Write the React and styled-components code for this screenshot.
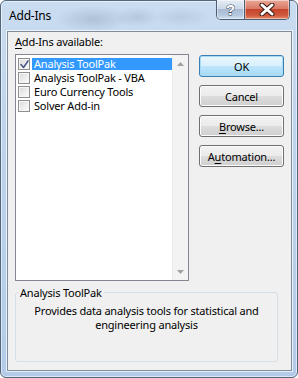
import React from "react";
import styled, { createGlobalStyle } from "styled-components";

const GlobalStyle = createGlobalStyle`
  html, body { margin: 0; padding: 0; background: #ffffff; }
  body { font-family: "Noto Sans", "Open Sans", sans-serif; font-size: 11px; letter-spacing: -0.2px; color: #000; }
  * { box-sizing: border-box; }
`;

const Frame = styled.div`
  width: 298px;
  height: 378px;
  border: 1px solid #52667f;
  border-radius: 6px;
  background:
    radial-gradient(ellipse 38px 13px at 92px 18px, rgba(110, 130, 155, 0.28), transparent),
    radial-gradient(ellipse 22px 10px at 136px 16px, rgba(110, 130, 155, 0.22), transparent),
    radial-gradient(ellipse 30px 10px at 180px 16px, rgba(110, 130, 155, 0.16), transparent),
    linear-gradient(180deg, #cadcf0 0%, #bed4ec 35%, #b3cbe8 100%);
  box-shadow: inset 0 0 0 1px rgba(255, 255, 255, 0.55);
  display: flex;
  flex-direction: column;
  padding: 0 5px 6px 6px;
`;

const TitleBar = styled.div`
  height: 30px;
  display: flex;
  align-items: flex-start;
  justify-content: space-between;
  padding-left: 2px;
`;

const Title = styled.div`
  font-size: 12px;
  line-height: 15px;
  padding-top: 7px;
  color: #000;
`;

const Caption = styled.div`
  display: flex;
  margin-top: -1px;
  margin-right: 2px;
  border: 1px solid #4b5d72;
  border-top: none;
  border-radius: 0 0 5px 5px;
  overflow: hidden;
  height: 20px;
`;

const CapButton = styled.div`
  width: ${(p) => p.$w}px;
  height: 100%;
  display: flex;
  align-items: center;
  justify-content: center;
  background: ${(p) =>
    p.$close
      ? "linear-gradient(180deg, #e9a898 0%, #d97a66 45%, #c5452c 50%, #d0583c 80%, #e48a6c 100%)"
      : "linear-gradient(180deg, #e4ecf6 0%, #cdd9e8 45%, #a9bbd2 50%, #b6c8de 80%, #d2e0ef 100%)"};
  box-shadow: inset 0 0 0 1px rgba(255, 255, 255, 0.45);
  & + & { border-left: 1px solid #4b5d72; }
`;

const HelpGlyph = styled.span`
  font-family: "Liberation Sans", sans-serif;
  font-weight: bold;
  font-size: 15px;
  line-height: 15px;
  letter-spacing: 0;
  color: #ffffff;
  -webkit-text-stroke: 1px #3c4a5c;
  paint-order: stroke fill;
`;

const Client = styled.div`
  flex: 1;
  border: 1px solid #7f8c9c;
  box-shadow: 0 0 0 1px rgba(255, 255, 255, 0.7);
  background: #f0f0f0;
  display: flex;
  flex-direction: column;
  padding: 2px 6px 0 7px;
`;

const Label = styled.div`
  line-height: 15px;
  height: 15px;
  margin-bottom: 5px;
`;

const Key = styled.span`
  text-decoration: underline;
  text-underline-offset: 2px;
`;

const Main = styled.div`
  display: flex;
  gap: 10px;
  align-items: flex-start;
`;

const ListBox = styled.div`
  width: 174px;
  height: 227px;
  border: 1px solid #828790;
  background: #ffffff;
  display: flex;
`;

const Items = styled.div`
  flex: 1;
  display: flex;
  flex-direction: column;
  padding: 3px 0 0 2px;
`;

const Row = styled.div`
  height: 14px;
  display: flex;
  align-items: flex-start;
  gap: 2px;
`;

const Check = styled.div`
  width: 12px;
  height: 12px;
  border: 1px solid #8e8f8f;
  background: linear-gradient(135deg, #d8d8d8 0%, #f0f0f0 60%, #fbfbfb 100%);
  box-shadow: inset 0 0 0 1px #f6f6f6;
  display: flex;
  align-items: center;
  justify-content: center;
`;

const ItemText = styled.span`
  line-height: 12px;
  height: 12px;
  padding: 0 2px 0 2px;
  flex: ${(p) => (p.$selected ? 1 : "0 0 auto")};
  background: ${(p) => (p.$selected ? "#3399ff" : "transparent")};
  color: ${(p) => (p.$selected ? "#ffffff" : "#000000")};
  white-space: nowrap;
`;

const ScrollBar = styled.div`
  width: 16px;
  background: #f3f3f3;
  border-left: 1px solid #ececec;
  display: flex;
  flex-direction: column;
  justify-content: space-between;
`;

const ArrowBox = styled.div`
  height: 17px;
  display: flex;
  align-items: center;
  justify-content: center;
`;

const Buttons = styled.div`
  width: 85px;
  display: flex;
  flex-direction: column;
  gap: 8px;
  margin-top: 1px;
`;

const Button = styled.div`
  height: 22px;
  border: 1px solid ${(p) => (p.$default ? "#3c7fb1" : "#707070")};
  border-radius: 3px;
  background: ${(p) =>
    p.$default
      ? "linear-gradient(180deg, #eaf6fd 0%, #d9f0fc 50%, #bee6fd 50%, #a7d9f5 100%)"
      : "linear-gradient(180deg, #f2f2f2 0%, #ebebeb 50%, #dddddd 50%, #cfcfcf 100%)"};
  box-shadow: inset 0 0 0 1px ${(p) => (p.$default ? "#a8dcf5" : "#fcfcfc")};
  display: flex;
  align-items: center;
  justify-content: center;
  line-height: 15px;
  color: #000;
`;

const Group = styled.fieldset`
  margin: 4px 7px 0 0;
  padding: 0 2px 0 2px;
  height: 77px;
  border: 1px solid #d5dfe5;
  border-radius: 3px;
`;

const Legend = styled.legend`
  padding: 0 2px;
  line-height: 15px;
`;

const Desc = styled.div`
  margin-top: 4px;
  text-align: center;
  line-height: 14px;
`;

function CheckMark() {
  return (
    <svg width="9" height="9" viewBox="0 0 9 9">
      <path d="M1 4.5 L3.5 7.5 L8 1" fill="none" stroke="#4b5a8a" strokeWidth="1.6" strokeLinejoin="round" strokeLinecap="round" />
    </svg>
  );
}

function CloseX() {
  return (
    <svg width="16" height="13" viewBox="0 0 16 13">
      <path d="M3 2 L13 11 M13 2 L3 11" stroke="#3a1a12" strokeWidth="5" strokeLinecap="round" />
      <path d="M3 2 L13 11 M13 2 L3 11" stroke="#ffffff" strokeWidth="3" strokeLinecap="round" />
    </svg>
  );
}

function Arrow({ down }) {
  return (
    <svg width="7" height="4" viewBox="0 0 7 4">
      <path d={down ? "M0 0 H7 L3.5 4 Z" : "M0 4 H7 L3.5 0 Z"} fill="#a0a0a0" />
    </svg>
  );
}

const items = [
  { name: "Analysis ToolPak", checked: true, selected: true },
  { name: "Analysis ToolPak - VBA" },
  { name: "Euro Currency Tools" },
  { name: "Solver Add-in" },
];

export default function App() {
  return (
    <>
      <GlobalStyle />
      <Frame>
        <TitleBar>
          <Title>Add-Ins</Title>
          <Caption>
            <CapButton $w={27}>
              <HelpGlyph>?</HelpGlyph>
            </CapButton>
            <CapButton $w={45} $close>
              <CloseX />
            </CapButton>
          </Caption>
        </TitleBar>
        <Client>
          <Label>
            <Key>A</Key>dd-Ins available:
          </Label>
          <Main>
            <ListBox>
              <Items>
                {items.map((it) => (
                  <Row key={it.name}>
                    <Check>{it.checked && <CheckMark />}</Check>
                    <ItemText $selected={it.selected}>{it.name}</ItemText>
                  </Row>
                ))}
              </Items>
              <ScrollBar>
                <ArrowBox>
                  <Arrow />
                </ArrowBox>
                <ArrowBox>
                  <Arrow down />
                </ArrowBox>
              </ScrollBar>
            </ListBox>
            <Buttons>
              <Button $default>OK</Button>
              <Button>Cancel</Button>
              <Button>
                <span>
                  <Key>B</Key>rowse...
                </span>
              </Button>
              <Button>
                <span>
                  A<Key>u</Key>tomation...
                </span>
              </Button>
            </Buttons>
          </Main>
          <Group>
            <Legend>Analysis ToolPak</Legend>
            <Desc>
              Provides data analysis tools for statistical and
              <br />
              engineering analysis
            </Desc>
          </Group>
        </Client>
      </Frame>
    </>
  );
}
